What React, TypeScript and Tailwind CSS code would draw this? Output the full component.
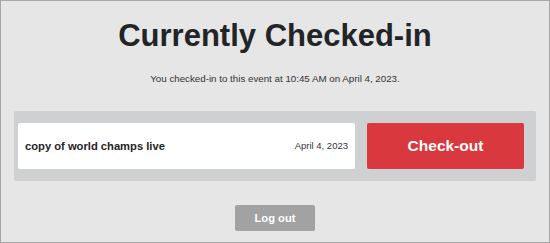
export default function App() {
  return (
    <div
      className="flex h-[243px] w-[550px] flex-col items-center border border-[#a7a7a7] bg-[#e6e6e6] text-[#222426]"
      style={{ fontFamily: '"Liberation Sans", Arial, sans-serif' }}
    >
      <h1 className="mt-[17px] text-[31px] font-bold leading-[36px]">Currently Checked-in</h1>
      <p className="mt-[19px] text-[9.75px] leading-[12px] text-[#333]">
        You checked-in to this event at 10:45 AM on April 4, 2023.
      </p>

      <div className="mt-[26px] flex w-[522px] gap-[12px] rounded-[2px] bg-[#cfd0d2] pb-[12px] pl-[4px] pr-[12px] pt-[12px]">
        <div className="flex h-[46px] w-[337px] items-center justify-between rounded-[2px] bg-white pl-[7px] pr-[7px]">
          <span className="text-[11.2px] font-bold">copy of world champs live</span>
          <span className="text-[9.5px] text-[#333]">April 4, 2023</span>
        </div>
        <button className="flex h-[46px] w-[157px] items-center justify-center rounded-[2px] bg-[#d9383e] text-[15.5px] font-bold text-white">
          Check-out
        </button>
      </div>

      <button className="mt-[24px] flex h-[26px] w-[80px] items-center justify-center rounded-[2px] bg-[#a2a2a2] text-[11.2px] font-bold text-white">
        Log out
      </button>
    </div>
  );
}
